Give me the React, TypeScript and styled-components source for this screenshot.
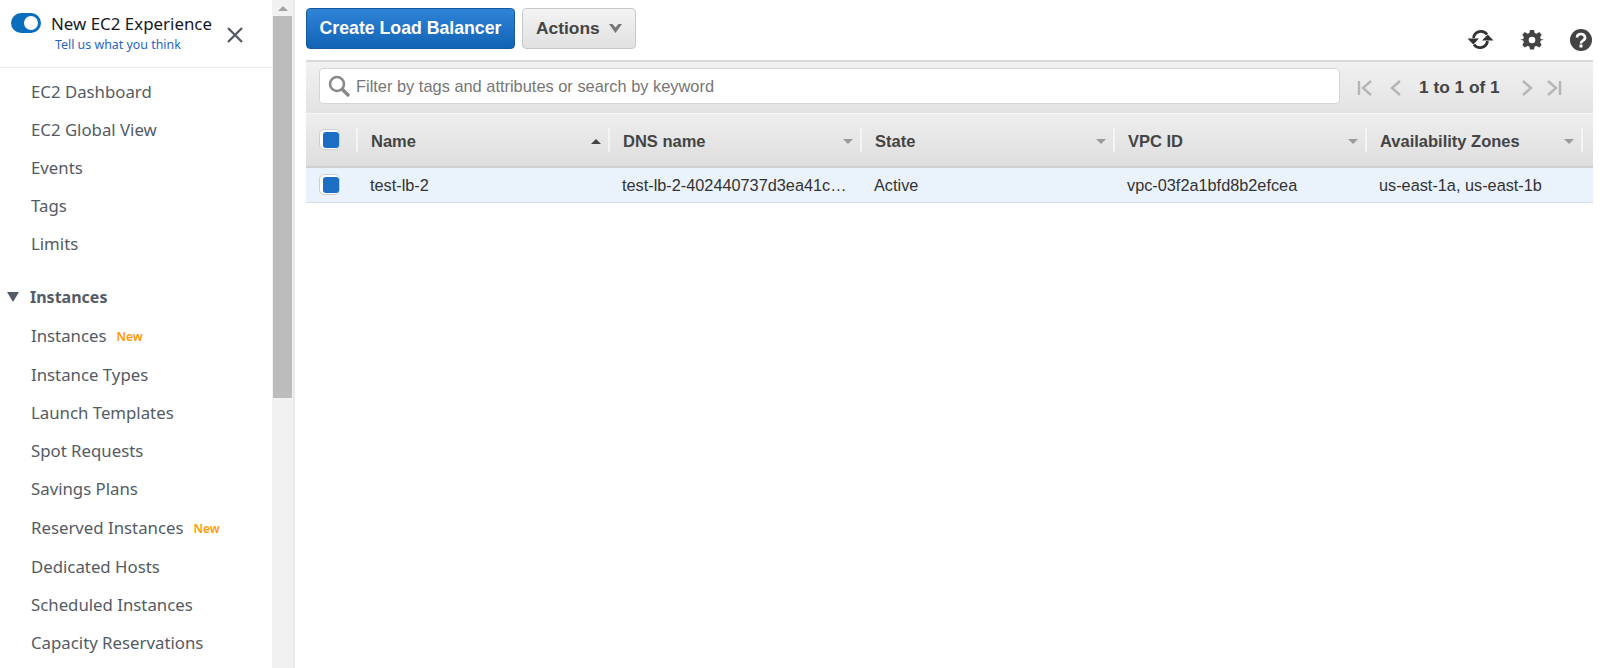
import React from 'react';
import styled, { createGlobalStyle } from 'styled-components';

const GlobalStyle = createGlobalStyle`
  html, body { margin: 0; padding: 0; height: 100%; background: #fff; overflow: hidden; }
  #root { height: 100%; }
`;

// --- Layout ---
const Page = styled.div`
  display: flex;
  width: 1600px;
  height: 668px;
  overflow: hidden;
  font-family: "Liberation Sans", Arial, sans-serif;
`;

const Sidebar = styled.aside`
  width: 272px;
  flex: none;
  font-family: "Noto Sans", "Open Sans", sans-serif;
  color: #545b64;
`;

const Experience = styled.div`
  height: 68px;
  box-sizing: border-box;
  border-bottom: 1px solid #eaeded;
  display: flex;
  padding: 13px 0 0 11px;
`;

const Toggle = styled.div`
  width: 30px;
  height: 20px;
  border-radius: 10px;
  background: #0a6ebd;
  position: relative;
  flex: none;
  &::after {
    content: '';
    position: absolute;
    right: 3px;
    top: 3px;
    width: 14px;
    height: 14px;
    border-radius: 50%;
    background: #fff;
  }
`;

const ExperienceText = styled.div`
  margin-left: 10px;
  width: 167px;
  flex: none;
`;

const ExperienceTitle = styled.div`
  font-size: 16.9px;
  line-height: 22px;
  color: #16191f;
  white-space: nowrap;
`;

const FeedbackLink = styled.div`
  font-size: 12.4px;
  line-height: 16px;
  margin: 2px 0 0 4px;
  color: #1f66c1;
  white-space: nowrap;
`;

const CloseIcon = styled.svg`
  width: 18px;
  height: 18px;
  margin: 13px 0 0 8px;
  flex: none;
`;

const NavList = styled.nav`
  display: flex;
  flex-direction: column;
  padding-top: 4px;
`;

const NavItem = styled.div<{ $height?: number }>`
  height: ${(p) => p.$height ?? 38}px;
  padding-left: 31px;
  font-size: 16.8px;
  color: #545b64;
  white-space: nowrap;
  display: flex;
  align-items: center;
`;

const NavGroup = styled.div`
  height: 38px;
  margin-top: 16px;
  display: flex;
  align-items: center;
  padding-left: 7px;
  font-size: 16px;
  font-weight: 700;
  color: #545b64;
`;

const GroupCaret = styled.span`
  width: 0;
  height: 0;
  border-left: 6.5px solid transparent;
  border-right: 6.5px solid transparent;
  border-top: 10px solid #545b64;
  margin-right: 11px;
`;

const NewBadge = styled.span`
  color: #ff9900;
  font-size: 12px;
  font-weight: 600;
  margin-left: 10px;
  padding-top: 2px;
`;

const Scrollbar = styled.div`
  width: 21px;
  flex: none;
  background: #f1f1f1;
  display: flex;
  flex-direction: column;
  align-items: center;
`;

const ScrollArrow = styled.div`
  height: 16px;
  flex: none;
  display: flex;
  align-items: center;
  &::before {
    content: '';
    border-left: 5px solid transparent;
    border-right: 5px solid transparent;
    border-bottom: 5px solid #a3a3a3;
  }
`;

const ScrollThumb = styled.div`
  width: 19px;
  height: 382px;
  background: #bcbcbc;
`;

const Divider = styled.div`
  width: 2px;
  flex: none;
  background: #e9ebeb;
`;

const Main = styled.main`
  width: 1287px;
  flex: none;
  margin-left: 11px;
`;

const Toolbar = styled.div`
  height: 60px;
  box-sizing: border-box;
  padding-top: 8px;
  display: flex;
  position: relative;
`;

const PrimaryButton = styled.div`
  width: 209px;
  height: 41px;
  box-sizing: border-box;
  border: 1px solid #15599f;
  border-radius: 4px;
  background: linear-gradient(#2f84d8, #1263b5);
  color: #fff;
  font-size: 17.7px;
  font-weight: 700;
  display: flex;
  align-items: center;
  justify-content: center;
`;

const ActionsButton = styled.div`
  width: 114px;
  height: 41px;
  box-sizing: border-box;
  margin-left: 7px;
  border: 1px solid #c8c8c8;
  border-radius: 4px;
  background: linear-gradient(#f3f3f3, #e1e1e1);
  color: #444;
  font-size: 17.4px;
  font-weight: 700;
  display: flex;
  align-items: center;
  padding-left: 13px;
  gap: 9px;
`;

const ToolIcons = styled.div`
  position: absolute;
  right: 0;
  top: 26px;
  display: flex;
  align-items: center;
`;

const ToolIcon = styled.svg<{ $gap?: number; $size?: number }>`
  width: ${(p) => p.$size ?? 24}px;
  height: ${(p) => p.$size ?? 24}px;
  margin-left: ${(p) => p.$gap ?? 0}px;
  display: block;
`;

const FilterBar = styled.div`
  height: 54px;
  box-sizing: border-box;
  border-top: 2px solid #d9d9d9;
  border-bottom: 1px solid #f6f6f6;
  background: linear-gradient(#f1f1f1, #e3e3e3);
  display: flex;
  align-items: center;
  padding: 0 0 3px 13px;
`;

const SearchBox = styled.div`
  width: 1021px;
  height: 36px;
  box-sizing: border-box;
  border: 1px solid #d5d5d5;
  border-radius: 4px;
  background: #fff;
  display: flex;
  align-items: center;
  padding-left: 7px;
  gap: 5px;
  color: #767676;
  font-size: 16.4px;
`;

const Pager = styled.div`
  display: flex;
  align-items: center;
  margin: 3px 0 0 17px;
  color: #444;
  font-size: 17.3px;
  font-weight: 700;
`;

const PagerIcon = styled.svg<{ $gap: number }>`
  width: 16px;
  height: 20px;
  margin-left: ${(p) => p.$gap}px;
  flex: none;
`;

const PagerLabel = styled.span`
  margin-left: 15px;
  margin-right: 3px;
  white-space: nowrap;
`;

const columns = '50px 252px 252px 253px 252px 216px 12px';

const HeadRow = styled.div`
  height: 54px;
  box-sizing: border-box;
  border-bottom: 2px solid #cfcfcf;
  background: linear-gradient(#eeeeee, #dedede);
  display: grid;
  grid-template-columns: ${columns};
  align-items: center;
`;

const HeadCell = styled.div`
  height: 24px;
  display: flex;
  align-items: center;
  justify-content: space-between;
  box-sizing: border-box;
  padding: 2px 7px 0 13px;
  border-left: 2px solid #f4f4f4;
  color: #444;
  font-size: 16.5px;
  font-weight: 700;
`;

const CheckCell = styled.div`
  display: flex;
  padding: 0 0 2px 13px;
`;

const Check = styled.div`
  width: 21px;
  height: 21px;
  box-sizing: border-box;
  border: 1px solid #cfcfcf;
  border-radius: 5px;
  background: #fff;
  padding: 2px 0 0 3px;
  &::after {
    content: '';
    display: block;
    width: 16px;
    height: 16px;
    border-radius: 3px;
    background: #1b6ec2;
  }
`;

const SortCaret = styled.span<{ $up?: boolean }>`
  width: 0;
  height: 0;
  border-left: 5px solid transparent;
  border-right: 5px solid transparent;
  ${(p) =>
    p.$up
      ? 'border-bottom: 5px solid #444; margin-right: 0;'
      : 'border-top: 5px solid #999;'}
`;

const DataRow = styled.div`
  height: 35px;
  box-sizing: border-box;
  border-bottom: 1px solid #d5dde5;
  background: #eaf2fc;
  display: grid;
  grid-template-columns: ${columns};
  align-items: center;
`;

const DataCell = styled.div`
  padding-left: 14px;
  color: #333;
  font-size: 16.3px;
  white-space: nowrap;
`;

const topLinks = ['EC2 Dashboard', 'EC2 Global View', 'Events', 'Tags', 'Limits'];
const instanceLinks: { label: string; isNew?: boolean; height?: number }[] = [
  { label: 'Instances', isNew: true, height: 39 },
  { label: 'Instance Types' },
  { label: 'Launch Templates' },
  { label: 'Spot Requests' },
  { label: 'Savings Plans', height: 39 },
  { label: 'Reserved Instances', isNew: true, height: 39 },
  { label: 'Dedicated Hosts' },
  { label: 'Scheduled Instances' },
  { label: 'Capacity Reservations' },
];
const headers = ['Name', 'DNS name', 'State', 'VPC ID', 'Availability Zones'];
const cells = ['test-lb-2', 'test-lb-2-402440737d3ea41c…', 'Active', 'vpc-03f2a1bfd8b2efcea', 'us-east-1a, us-east-1b'];

const App: React.FC = () => {
  return (
    <Page>
      <GlobalStyle />
      <Sidebar>
        <Experience>
          <Toggle />
          <ExperienceText>
            <ExperienceTitle>New EC2 Experience</ExperienceTitle>
            <FeedbackLink>Tell us what you think</FeedbackLink>
          </ExperienceText>
          <CloseIcon viewBox="0 0 18 18">
            <path d="M2 2l14 14M16 2L2 16" stroke="#545b64" strokeWidth="2.3" fill="none" />
          </CloseIcon>
        </Experience>
        <NavList>
          {topLinks.map((l) => (
            <NavItem key={l}>{l}</NavItem>
          ))}
          <NavGroup>
            <GroupCaret />
            Instances
          </NavGroup>
          {instanceLinks.map((l) => (
            <NavItem key={l.label} $height={l.height}>
              {l.label}
              {l.isNew && <NewBadge>New</NewBadge>}
            </NavItem>
          ))}
        </NavList>
      </Sidebar>
      <Scrollbar>
        <ScrollArrow />
        <ScrollThumb />
      </Scrollbar>
      <Divider />
      <Main>
        <Toolbar>
          <PrimaryButton>Create Load Balancer</PrimaryButton>
          <ActionsButton>
            Actions
            <svg width="13" height="10" viewBox="0 0 13 10">
              <path d="M0 0h3.500l3 3.500 3-3.500H13L6.500 9z" fill="#777" />
            </svg>
          </ActionsButton>
          <ToolIcons>
            <ToolIcon $size={27} viewBox="0 0 27 27">
              <path d="M6.500 12a7.500 7.500 0 0 1 13.500-3.500M20.500 15A7.500 7.500 0 0 1 7 18.500" stroke="#333" strokeWidth="2.8" fill="none" />
              <path d="M0.500 12.500h11.500l-5.700 6zM15 14.500h11.500l-5.800-6z" fill="#333" />
            </ToolIcon>
            <ToolIcon $gap={26} viewBox="0 0 24 24">
              <path
                fill="#444"
                fillRule="evenodd"
                d="M10 2h4l.7 3 1.800.7 2.600-1.600 2.600 2.600-1.600 2.600.7 1.800 3 .7v0l-3 .7-.7 1.800 1.600 2.600-2.600 2.600-2.600-1.600-1.800.7-.7 3h-4l-.7-3-1.800-.7-2.600 1.600-2.600-2.600 1.600-2.600-.7-1.800-3-.7 3-.7.7-1.800-1.600-2.600 2.600-2.600 2.600 1.600 1.800-.7zM12 8.700a3.300 3.300 0 1 0 0 6.600 3.300 3.300 0 0 0 0-6.600z"
              />
            </ToolIcon>
            <ToolIcon $gap={25} viewBox="0 0 24 24">
              <circle cx="12" cy="12" r="11" fill="#444" />
              <path d="M8 9.500a4 3.500 0 1 1 6 3c-1.500.9-2 1.500-2 3" stroke="#fff" strokeWidth="2.600" fill="none" />
              <rect x="10.500" y="16.500" width="3" height="3" fill="#fff" />
            </ToolIcon>
          </ToolIcons>
        </Toolbar>
        <FilterBar>
          <SearchBox>
            <svg width="24" height="24" viewBox="0 0 24 24">
              <circle cx="10" cy="10" r="7" stroke="#888" strokeWidth="2.500" fill="none" />
              <path d="M15 15l7 7" stroke="#888" strokeWidth="3.500" />
            </svg>
            Filter by tags and attributes or search by keyword
          </SearchBox>
          <Pager>
            <PagerIcon $gap={0} viewBox="0 0 16 20">
              <path d="M2 3v14M14 3L6 10l8 7" stroke="#b5b5b5" strokeWidth="2.400" fill="none" />
            </PagerIcon>
            <PagerIcon $gap={15} viewBox="0 0 16 20">
              <path d="M12 3L4 10l8 7" stroke="#b5b5b5" strokeWidth="2.400" fill="none" />
            </PagerIcon>
            <PagerLabel>1 to 1 of 1</PagerLabel>
            <PagerIcon $gap={16} viewBox="0 0 16 20">
              <path d="M4 3l8 7-8 7" stroke="#b5b5b5" strokeWidth="2.400" fill="none" />
            </PagerIcon>
            <PagerIcon $gap={11} viewBox="0 0 16 20">
              <path d="M2 3l8 7-8 7M14 3v14" stroke="#b5b5b5" strokeWidth="2.400" fill="none" />
            </PagerIcon>
          </Pager>
        </FilterBar>
        <HeadRow>
          <CheckCell>
            <Check />
          </CheckCell>
          {headers.map((h, i) => (
            <HeadCell key={h}>
              {h}
              <SortCaret $up={i === 0} />
            </HeadCell>
          ))}
          <HeadCell />
        </HeadRow>
        <DataRow>
          <CheckCell>
            <Check />
          </CheckCell>
          {cells.map((c) => (
            <DataCell key={c}>{c}</DataCell>
          ))}
        </DataRow>
      </Main>
    </Page>
  );
};

export default App;
